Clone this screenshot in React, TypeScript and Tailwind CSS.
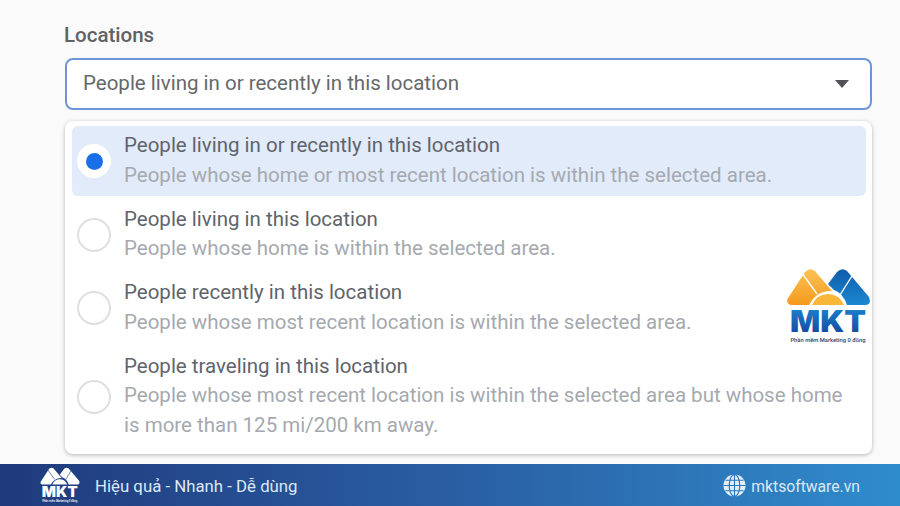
import { useId } from "react";

type Option = {
  title: string;
  lines: string[];
  selected?: boolean;
};

const OPTIONS: Option[] = [
  {
    title: "People living in or recently in this location",
    lines: ["People whose home or most recent location is within the selected area."],
    selected: true,
  },
  {
    title: "People living in this location",
    lines: ["People whose home is within the selected area."],
  },
  {
    title: "People recently in this location",
    lines: ["People whose most recent location is within the selected area."],
  },
  {
    title: "People traveling in this location",
    lines: [
      "People whose most recent location is within the selected area but whose home",
      "is more than 125 mi/200 km away.",
    ],
  },
];

function LogoMark({ white }: { white?: boolean }) {
  const id = useId();
  const orange = white ? "#ffffff" : `url(#${id}o)`;
  const blue = white ? "#ffffff" : `url(#${id}b)`;
  const sun = white ? "#ffffff" : "#f9b73a";
  const word = white ? "#ffffff" : `url(#${id}t)`;
  const line = white ? "#2a4384" : "#ffffff";
  return (
    <svg viewBox="0 0 85 78" className="w-full h-full">
      <defs>
        <linearGradient id={`${id}o`} x1="0" y1="0" x2="0" y2="1">
          <stop offset="0" stopColor="#fbc256" />
          <stop offset="1" stopColor="#f5991c" />
        </linearGradient>
        <linearGradient id={`${id}b`} x1="0" y1="0" x2="0" y2="1">
          <stop offset="0" stopColor="#0f5cab" />
          <stop offset="1" stopColor="#1b88d2" />
        </linearGradient>
        <linearGradient id={`${id}t`} x1="0" y1="0" x2="0" y2="1">
          <stop offset="0" stopColor="#1c8bd3" />
          <stop offset="1" stopColor="#143f98" />
        </linearGradient>
      </defs>
      <path d="M1.5 32 L19 5 Q24 0 29 4 L46 24 Q31 23 23 38 L5 38 Q0 37 1.5 32Z" fill={orange} />
      <path d="M42 17 L51 5 Q56 0 61 4 L83 30 Q86 38 79 38 L61 38 Q57 26 48 23 Z" fill={blue} />
      <path d="M26 38 Q31 27 42 27 Q53 27 58 38 Z" fill={sun} />
      <path d="M16 6 L31 27 M66 9 L54 28" stroke={line} strokeWidth="1.4" fill="none" />
      <text
        x="4"
        y="65"
        textLength={76}
        lengthAdjust="spacingAndGlyphs"
        fontFamily="Inter, sans-serif"
        fontWeight="900"
        fontSize="30"
        fill={word}
      >
        MKT
      </text>
      <text
        x="42"
        y="75"
        textAnchor="middle"
        fontFamily="Roboto, sans-serif"
        fontWeight="500"
        fontSize="5.8"
        fill={white ? "#ffffff" : "#2c3e6b"}
      >
        Phần mềm Marketing 0 đồng
      </text>
    </svg>
  );
}

export default function App() {
  return (
    <div className="relative w-[900px] h-[506px] overflow-hidden bg-[#fafafa] flex flex-col font-['Roboto',sans-serif]">
      <div className="flex-1 pl-[64px] pr-[28px] pt-[24px]">
        <div className="text-[20.5px] leading-[22px] font-medium text-[#606266]">Locations</div>

        <div className="mt-[12px] ml-[1px] h-[52px] rounded-[8px] border-2 border-[#6f96d4] bg-white flex items-center justify-between pl-[16px] pr-[21px]">
          <span className="text-[20.5px] leading-[28px] pb-[3px] text-[#65686c]">
            People living in or recently in this location
          </span>
          <span className="w-0 h-0 border-x-[7.5px] border-x-transparent border-t-[8px] border-t-[#505256]" />
        </div>

        <div className="mt-[11px] ml-[1px] h-[333px] rounded-[8px] bg-white shadow-[0_1px_4px_rgba(0,0,0,0.28)] pt-[5px] pl-[7px] pr-[6px] flex flex-col">
          {OPTIONS.map((o) => (
            <div
              key={o.title}
              className={`flex rounded-[6px] pl-[5px] pt-[5px] ${o.selected ? "bg-[#e2ebfa]" : ""} ${o.lines.length > 1 ? "h-[100px]" : "h-[70px] mb-[3.5px]"}`}
            >
              <span
                className={`w-[34px] h-[34px] shrink-0 self-center -mt-[5px] rounded-full flex items-center justify-center bg-white ${o.selected ? "" : "border-2 border-[#dedfe1]"}`}
              >
                {o.selected && <span className="w-[17px] h-[17px] rounded-full bg-[#1a6fe8]" />}
              </span>
              <div className="ml-[13px] text-[20.5px] leading-[29.5px]">
                <div className="text-[#5f646b]">{o.title}</div>
                {o.lines.map((l) => (
                  <div key={l} className="text-[#a5a9af] whitespace-nowrap">
                    {l}
                  </div>
                ))}
              </div>
            </div>
          ))}
        </div>
      </div>

      <div className="h-[42px] shrink-0 bg-gradient-to-r from-[#1f3a7c] via-[#2a5ea3] to-[#2f8ccb] flex items-center justify-between pl-[40px] pr-[40px]">
        <div className="flex items-center">
          <div className="w-[40px] h-[38px]">
            <LogoMark white />
          </div>
          <span className="ml-[15px] mt-[3px] text-[16.8px] text-[#dce8f6]">Hiệu quả - Nhanh - Dễ dùng</span>
        </div>
        <div className="flex items-center">
          <svg viewBox="0 0 24 24" className="w-[23px] h-[23px] mt-[1px]" fill="none" stroke="#2a78ba" strokeWidth="1.2">
            <circle cx="12" cy="12" r="11.5" fill="#e3eef8" stroke="none" />
            <ellipse cx="12" cy="12" rx="5.5" ry="11.5" />
            <path d="M12 0.5V23.5M0.5 12H23.5M2.5 6.5H21.5M2.5 17.5H21.5" />
          </svg>
          <span className="ml-[5px] mt-[3px] text-[15.7px] text-[#dce8f6]">mktsoftware.vn</span>
        </div>
      </div>

      {/* watermark over the panel */}
      <div className="absolute left-[786px] top-[267px] w-[85px] h-[78px]">
        <LogoMark />
      </div>
    </div>
  );
}
